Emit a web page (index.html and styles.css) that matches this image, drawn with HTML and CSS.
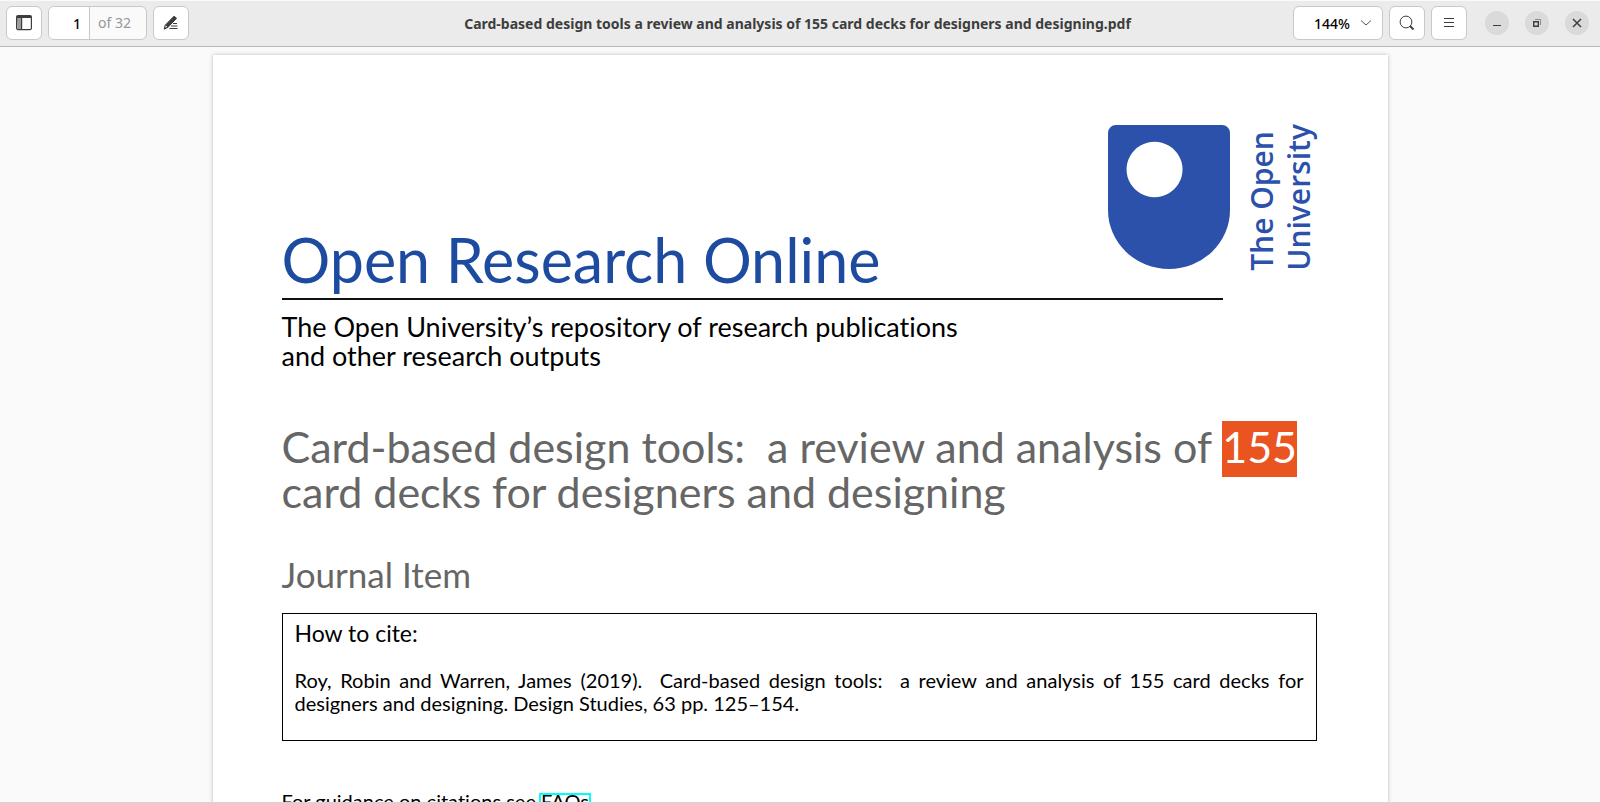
FILE: index.html
```html
<!DOCTYPE html>
<html lang="en">
<head>
<meta charset="utf-8">
<meta name="viewport" content="width=device-width, initial-scale=1">
<title>Card-based design tools a review and analysis of 155 card decks for designers and designing.pdf</title>
<link rel="stylesheet" href="styles.css">
</head>
<body>
<header class="headerbar">
  <div class="tools tools-start">
    <button class="tool" type="button" aria-label="Side pane">
      <svg width="16" height="16" viewBox="0 0 16 16"><path d="M1 3h4.500v11.500H1.500z" fill="#9c9c9c"/><path d="M.6 3v10.200a1.400 1.400 0 0 0 1.400 1.400h12a1.400 1.400 0 0 0 1.400-1.400V3M5.600 3v11.500" fill="none" stroke="#3d3d3d" stroke-width="1.200"/><path d="M0 3V2A2 2 0 0 1 2 0h12a2 2 0 0 1 2 2v1z" fill="#3d3d3d"/></svg>
    </button>
    <div class="pager">
      <input class="pager-input" type="text" value="1" aria-label="Page number">
      <span class="pager-total">of 32</span>
    </div>
    <button class="tool" type="button" aria-label="Annotate">
      <svg width="16" height="16" viewBox="0 0 16 16"><path d="M11 1.200 13.600 3.300 5.200 12 2.500 9.900z" fill="#3d3d3d" stroke="#3d3d3d" stroke-linejoin="round"/><path d="M2.300 10.100 1.300 14l3.600-1.900" fill="none" stroke="#3d3d3d" stroke-width="1.200" stroke-linejoin="round"/><path d="M10 8.500h4M8 11h6.500M6.500 13.500h8" stroke="#3d3d3d"/></svg>
    </button>
  </div>
  <h1 class="window-title">Card-based design tools a review and analysis of 155 card decks for designers and designing.pdf</h1>
  <div class="tools tools-end">
    <button class="tool zoom" type="button" aria-label="Zoom 144%">144%
      <svg width="12" height="8" viewBox="0 0 12 8"><path d="m1 1.500 5 4.500 5-4.500" fill="none" stroke="#555"/></svg>
    </button>
    <button class="tool" type="button" aria-label="Find">
      <svg width="16" height="16" viewBox="0 0 16 16"><circle cx="7" cy="7" r="5.900" fill="none" stroke="#3d3d3d"/><path d="m11 11 3.500 3.500" stroke="#3d3d3d" stroke-width="1.800"/></svg>
    </button>
    <button class="tool" type="button" aria-label="Menu">
      <svg width="16" height="16" viewBox="0 0 16 16"><path d="M3 3.500h10M3 7.500h10M3 11.500h10" stroke="#3d3d3d"/></svg>
    </button>
    <div class="window-controls">
      <button class="control" type="button" aria-label="Minimise"><svg width="10" height="10" viewBox="0 0 10 10"><path d="M1 7.500h8" stroke="#3d3d3d"/></svg></button>
      <button class="control" type="button" aria-label="Restore"><svg width="10" height="10" viewBox="0 0 10 10"><path d="M1.700 3.700h4.600v4.600H1.700z" fill="none" stroke="#3d3d3d" stroke-width="1.400"/><path d="M3 1.500h5.500V7" fill="none" stroke="#8a8a8a"/></svg></button>
      <button class="control" type="button" aria-label="Close"><svg width="10" height="10" viewBox="0 0 10 10"><path d="m1 1 8 8M9 1 1 9" stroke="#3d3d3d" stroke-width="1.500"/></svg></button>
    </div>
  </div>
</header>
<main class="viewer">
  <article class="page">
    <div class="masthead">
      <h2 class="repository">Open Research Online</h2>
      <div class="logo">
        <svg width="122" height="145" viewBox="0 0 122 145"><path fill="#2b51aa" fill-rule="evenodd" d="M8 1h106a8 8 0 0 1 8 8v77a61 59 0 0 1-122 0V9a8 8 0 0 1 8-8zM46.500 17.800a28 27.700 0 1 0 .1 0z"/></svg>
        <p class="logo-name">The Open<br>University</p>
      </div>
    </div>
    <hr class="rule">
    <p class="tagline">The Open University’s repository of research publications<br>and other research outputs</p>
    <h3 class="paper-title">Card-based design tools:&nbsp; a review and analysis of <mark class="match">155</mark><br>card decks for designers and designing</h3>
    <p class="kind">Journal Item</p>
    <section class="citation">
      <h4 class="citation-heading">How to cite:</h4>
      <p class="citation-text">Roy, Robin and Warren, James (2019).&nbsp; Card-based design tools:&nbsp; a review and analysis of 155 card decks for designers and designing. Design Studies, 63 pp. 125–154.</p>
    </section>
    <p class="guidance">For guidance on citations see <a class="faq" href="#faqs">FAQs</a></p>
  </article>
</main>
</body>
</html>
```

FILE: styles.css
```css
* {
  box-sizing: border-box;
}

body {
  margin: 0;
  height: 100vh;
  display: flex;
  flex-direction: column;
  background: #fafafa;
  overflow: hidden;
}

h1, h2, h3, h4, p {
  margin: 0;
  font-weight: 400;
}

.headerbar {
  display: grid;
  grid-template-columns: 1fr auto 1fr;
  align-items: center;
  height: 47px;
  padding: 0 11px 1px 6px;
  background: #ebebeb;
  border-top: 1px solid #fafafa;
  border-bottom: 1px solid #b8b8b8;
  font-family: "Noto Sans", sans-serif;
  font-size: 14px;
}

.tools {
  display: flex;
  align-items: center;
  gap: 6px;
}

.tools-end {
  justify-content: flex-end;
}

.tool {
  display: flex;
  align-items: center;
  justify-content: center;
  width: 36px;
  height: 34px;
  padding: 0;
  background: #fff;
  border: 1px solid #c8c8c8;
  border-radius: 6px;
  color: #000;
  font: inherit;
  font-weight: 500;
}

.zoom {
  width: 90px;
  gap: 10px;
  padding-left: 10px;
}

.pager {
  display: flex;
  width: 99px;
  height: 34px;
  background: #fafafa;
  border: 1px solid #c8c8c8;
  border-radius: 6px;
  overflow: hidden;
}

.pager-input {
  width: 41px;
  padding: 0 8px;
  border: 0;
  border-right: 1px solid #c8c8c8;
  background: #fff;
  color: #000;
  font: inherit;
  font-weight: 500;
  text-align: right;
}

.pager-total {
  flex: 1;
  padding-left: 8px;
  color: #989898;
  line-height: 32px;
}

.window-title {
  color: #3d3d3d;
  font-size: 14px;
  font-weight: 700;
  white-space: nowrap;
}

.window-controls {
  display: flex;
  gap: 16px;
  margin-left: 12px;
}

.control {
  display: flex;
  align-items: center;
  justify-content: center;
  width: 24px;
  height: 24px;
  padding: 0;
  background: #dadada;
  border: 0;
  border-radius: 50%;
}

.viewer {
  flex: 1;
  min-height: 0;
  padding: 8px 8px 0;
  border-bottom: 1px solid #d4d4d4;
  overflow: hidden;
}

.page {
  max-width: 1175px;
  min-height: 100%;
  margin: 0 auto;
  padding: 69px 71px 69px 69px;
  background: #fff;
  box-shadow: 0 0 4px rgba(0, 0, 0, 0.25);
  font-family: Lato, "Open Sans", sans-serif;
  font-variant-ligatures: none;
  color: #000;
}

.masthead {
  display: flex;
  justify-content: space-between;
  align-items: flex-start;
}

.repository {
  margin-top: 100px;
  color: #1d4b9f;
  font-size: 61px;
  line-height: 72px;
}

.logo {
  display: flex;
  gap: 13px;
}

.logo-name {
  color: #2b51aa;
  font-family: "Open Sans", sans-serif;
  font-size: 30px;
  font-weight: 600;
  line-height: 37px;
  white-space: nowrap;
  writing-mode: vertical-rl;
  transform: rotate(180deg);
}

.rule {
  width: 91%;
  height: 2px;
  margin: 2px 0 0;
  border: 0;
  background: #111;
}

.tagline {
  margin-top: 12px;
  font-size: 27px;
  line-height: 29px;
}

.paper-title {
  margin-top: 54px;
  color: #666;
  font-size: 43px;
  line-height: 45px;
}

.match {
  padding-bottom: 5px;
  background: #e95420;
  color: #fff;
}

.kind {
  margin-top: 38px;
  color: #666;
  font-size: 35px;
  line-height: 44px;
}

.citation {
  margin-top: 17px;
  padding: 5px 12px 25px;
  border: 1px solid #000;
}

.citation-heading {
  font-size: 23px;
  line-height: 28px;
}

.citation-text {
  margin-top: 22px;
  font-size: 20px;
  line-height: 23px;
  text-align: justify;
}

.guidance {
  margin-top: 49px;
  font-size: 20px;
  line-height: 23px;
}

.faq {
  display: inline-block;
  color: inherit;
  line-height: 13px;
  text-decoration: none;
  outline: 2px solid #0ff;
}
```
